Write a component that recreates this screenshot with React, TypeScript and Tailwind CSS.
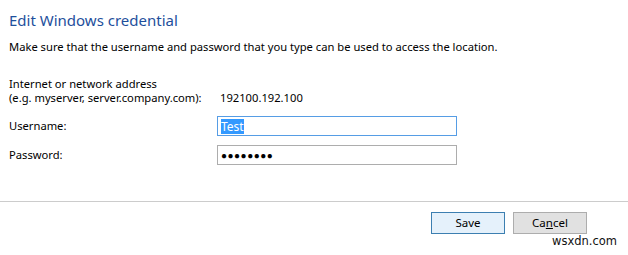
export default function App() {
	return (
		<div
			className="relative h-[255px] w-[628px] overflow-hidden bg-white text-[11.2px] text-[#000]"
			style={{ fontFamily: '"Noto Sans", "Open Sans", sans-serif' }}
		>
			<div className="px-[9px] pt-[9px]">
				<h1 className="text-[15px] leading-[22px] text-[#1e4f9c]">
					Edit Windows credential
				</h1>
				<p className="mt-[8px] leading-[16px]">
					Make sure that the username and password that you type can be used
					to access the location.
				</p>

				<div className="mt-[22px] flex">
					<div className="w-[208px] leading-[14px]">
						<div>Internet or network address</div>
						<div>(e.g. myserver, server.company.com):</div>
					</div>
					<div className="ml-[3px] self-end leading-[14px]">
						192100.192.100
					</div>
				</div>

				<div className="mt-[11px] flex items-center">
					<label className="w-[208px]">Username:</label>
					<div className="flex h-[20px] w-[240px] items-center border border-[#569de5] px-[3px]">
						<span className="bg-[#3399ff] text-[12px] leading-[15px] text-white">
							Test
						</span>
					</div>
				</div>

				<div className="mt-[9px] flex items-center">
					<label className="w-[208px]">Password:</label>
					<div className="flex h-[20px] w-[240px] items-center border border-[#adadad] px-[3px]">
						<span className="text-[10px] tracking-[0.5px]">●●●●●●●●</span>
					</div>
				</div>
			</div>

			<div className="mt-[36px] border-t border-[#cccccc]" />

			<div className="mt-[10px] flex justify-end gap-[8px] pr-[41px]">
				<button className="h-[22px] w-[74px] border border-[#3c7fb1] bg-[#e5f1fb] text-[11.5px]">
					Save
				</button>
				<button className="h-[22px] w-[74px] border border-[#adadad] bg-[#e1e1e1] text-[11.5px]">
					Ca<span className="underline">n</span>cel
				</button>
			</div>

			<div
				className="absolute right-[11px] bottom-[5px] text-[11.5px] text-[#111]"
				style={{ fontFamily: '"DejaVu Sans", sans-serif' }}
			>
				wsxdn.com
			</div>
		</div>
	);
}
